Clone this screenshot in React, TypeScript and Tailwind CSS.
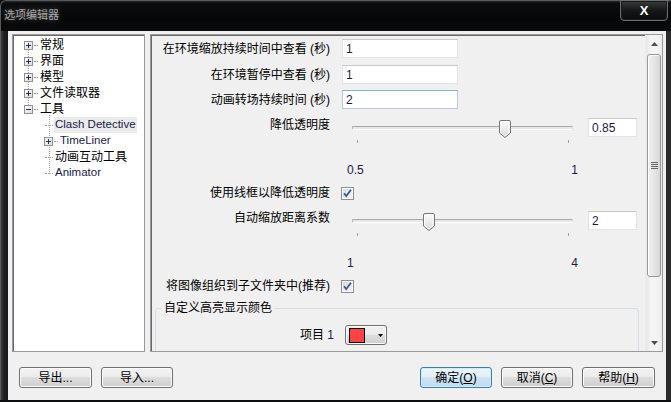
import React from "react";

const FONT = "font-['Liberation_Sans','Noto_Sans_CJK_SC',sans-serif]";
const LATIN = "text-[#1a1a4a]";

function PlusBox({ minus = false }: { minus?: boolean }) {
  return (
    <svg width="9" height="9" viewBox="0 0 9 9" className="shrink-0">
      <defs>
        <linearGradient id="pb" x1="0" y1="0" x2="1" y2="1">
          <stop offset="0" stopColor="#ffffff" />
          <stop offset="1" stopColor="#d8d8d8" />
        </linearGradient>
      </defs>
      <rect x="0.5" y="0.5" width="8" height="8" fill="url(#pb)" stroke="#919191" />
      <line x1="2" y1="4.5" x2="7" y2="4.5" stroke="#1f2f5f" />
      {!minus && <line x1="4.5" y1="2" x2="4.5" y2="7" stroke="#1f2f5f" />}
    </svg>
  );
}

function Dots({ w }: { w: number }) {
  return <div className="border-t border-dotted border-[#a0a0a0] shrink-0" style={{ width: w }} />;
}

function TreeRow({
  indent,
  box,
  minus,
  children,
  selected,
}: {
  indent: number;
  box: boolean;
  minus?: boolean;
  children: React.ReactNode;
  selected?: boolean;
}) {
  return (
    <div className="flex h-[16px] items-center" style={{ paddingLeft: indent }}>
      {box ? (
        <>
          <PlusBox minus={minus} />
          <div className="ml-[1px]">
            <Dots w={4} />
          </div>
        </>
      ) : (
        <div className="ml-[5px]">
          <Dots w={8} />
        </div>
      )}
      <div
        className={
          "ml-[1px] h-[16px] flex items-center px-[1px] whitespace-nowrap " +
          (selected ? "bg-[#ebebeb]" : "")
        }
      >
        {children}
      </div>
    </div>
  );
}

function Tree() {
  return (
    <div className="w-[133px] h-full bg-white border border-[#9a9a9a] shadow-[inset_1px_1px_0_#696969] relative overflow-hidden">
      <svg className="absolute left-0 top-0" width="133" height="200">
        <line x1="15.5" y1="15" x2="15.5" y2="71" stroke="#a0a0a0" strokeDasharray="1 1" />
        <line x1="36.5" y1="80" x2="36.5" y2="139" stroke="#a0a0a0" strokeDasharray="1 1" />
      </svg>
      <div className="relative pt-[2px] text-[12px] text-black">
        <TreeRow indent={11} box>
          常规
        </TreeRow>
        <TreeRow indent={11} box>
          界面
        </TreeRow>
        <TreeRow indent={11} box>
          模型
        </TreeRow>
        <TreeRow indent={11} box>
          文件读取器
        </TreeRow>
        <TreeRow indent={11} box minus>
          工具
        </TreeRow>
        <TreeRow indent={27} box={false} selected>
          <span className={"text-[11.5px] " + LATIN}>Clash Detective</span>
        </TreeRow>
        <TreeRow indent={31} box>
          <span className={"text-[11.5px] " + LATIN}>TimeLiner</span>
        </TreeRow>
        <TreeRow indent={27} box={false}>
          动画互动工具
        </TreeRow>
        <TreeRow indent={27} box={false}>
          <span className={"text-[11.5px] " + LATIN}>Animator</span>
        </TreeRow>
      </div>
    </div>
  );
}

function TextBox({ value, width, focus }: { value: string; width: number; focus?: boolean }) {
  return (
    <div
      className={
        "h-[19px] bg-white border flex items-center pl-[3px] text-[12px] " +
        LATIN +
        " " +
        (focus
          ? "border-[#b6cbe3] border-t-[#8eaed3]"
          : "border-[#e2e3ea] border-t-[#c7c9d0]")
      }
      style={{ width }}
    >
      {value}
    </div>
  );
}

function Label({ children, className = "" }: { children: React.ReactNode; className?: string }) {
  return <div className={"w-[179px] shrink-0 text-right whitespace-nowrap text-[12px] text-black " + className}>{children}</div>;
}

function Thumb() {
  return (
    <svg width="12" height="18" viewBox="0 0 12 18">
      <defs>
        <linearGradient id="th" x1="0" y1="0" x2="0" y2="1">
          <stop offset="0" stopColor="#fafafa" />
          <stop offset="0.5" stopColor="#ececec" />
          <stop offset="1" stopColor="#d4d4d4" />
        </linearGradient>
      </defs>
      <path d="M2 0.5 H10 Q11.5 0.5 11.5 2 V13 L6 17.5 L0.5 13 V2 Q0.5 0.5 2 0.5 Z" fill="url(#th)" stroke="#757575" />
      <path d="M2 1.5 H10 V12.6 L6 16 L1.5 12.6 V2 Z" fill="none" stroke="#ffffff" strokeOpacity="0.7" />
    </svg>
  );
}

function SliderRow({
  label,
  thumbLeft,
  min,
  max,
  value,
  mt,
}: {
  label: string;
  thumbLeft: number;
  min: string;
  max: string;
  value: string;
  mt: number;
}) {
  return (
    <div className="flex items-start" style={{ marginTop: mt }}>
      <Label className="leading-[15px]">{label}</Label>
      <div className="ml-[12px] w-[236px] shrink-0">
        <div className="relative h-[19px] pt-[8px] pl-[10px] pr-[5px]">
          <div className="h-[4px] rounded-[1px] border border-t-[#a9a9a9] border-l-[#b9b9b9] border-r-[#dcdcdc] border-b-white bg-[#e6e8e8]" />
          <div className="absolute top-[2px]" style={{ left: thumbLeft }}>
            <Thumb />
          </div>
        </div>
        <div className="flex justify-between pl-[15px] pr-[9px] mt-[3px] h-[4px]">
          <div className="w-[1px] h-[3px] bg-[#a0a0a0]" />
          <div className="w-[1px] h-[3px] bg-[#a0a0a0]" />
        </div>
        <div className={"flex justify-between pl-[5px] mt-[19px] leading-[14px] text-[12px] " + LATIN}>
          <span>{min}</span>
          <span>{max}</span>
        </div>
      </div>
      <div className="ml-[10px]">
        <TextBox value={value} width={49} />
      </div>
    </div>
  );
}

function CheckBox() {
  return (
    <svg width="13" height="13" viewBox="0 0 13 13" className="shrink-0">
      <defs>
        <linearGradient id="cb" x1="0" y1="0" x2="1" y2="1">
          <stop offset="0" stopColor="#d9d9d9" />
          <stop offset="1" stopColor="#f6f6f6" />
        </linearGradient>
      </defs>
      <rect x="0.5" y="0.5" width="12" height="12" fill="#fff" stroke="#8e8f8f" />
      <rect x="2" y="2" width="9" height="9" fill="url(#cb)" />
      <path d="M3 6.2 L5.2 9 L10 2.8" fill="none" stroke="#3a55a0" strokeWidth="1.7" />
    </svg>
  );
}

function CheckRow({ label, mt }: { label: React.ReactNode; mt: number }) {
  return (
    <div className="flex items-center h-[14px]" style={{ marginTop: mt }}>
      <Label className="leading-[14px]">{label}</Label>
      <div className="ml-[11px]">
        <CheckBox />
      </div>
    </div>
  );
}

function Scrollbar() {
  return (
    <div className="w-[17px] h-full flex flex-col bg-[linear-gradient(90deg,#e6e6e6,#f4f4f4_30%,#f4f4f4_70%,#ebebeb)] border-l border-[#ececec]">
      <div className="h-[17px] flex items-center justify-center">
        <svg width="7" height="4" viewBox="0 0 7 4">
          <path d="M0 4 L3.5 0 L7 4 Z" fill="#4d4d4d" />
        </svg>
      </div>
      <div className="mt-[2px] h-[223px] mx-[1px] rounded-[3px] border border-[#999999] bg-[linear-gradient(90deg,#f2f2f2,#e6e6e6_50%,#d6d6d6)] shadow-[inset_1px_1px_0_#ffffff] flex items-center justify-center">
        <div className="flex flex-col gap-[1px]">
          <div className="w-[7px] h-[1px] bg-[#666]" />
          <div className="w-[7px] h-[1px] bg-[#666]" />
          <div className="w-[7px] h-[1px] bg-[#666]" />
          <div className="w-[7px] h-[1px] bg-[#666]" />
        </div>
      </div>
      <div className="flex-1" />
      <div className="h-[17px] flex items-center justify-center">
        <svg width="7" height="4" viewBox="0 0 7 4">
          <path d="M0 0 L7 0 L3.5 4 Z" fill="#4d4d4d" />
        </svg>
      </div>
    </div>
  );
}

function ColorDrop() {
  return (
    <div className="w-[42px] h-[20px] rounded-[3px] border border-[#707070] bg-[linear-gradient(#f2f2f2_0%,#ebebeb_49%,#dddddd_50%,#cfcfcf_100%)] shadow-[inset_0_0_0_1px_#fbfbfb] flex items-center pl-[3px]">
      <div className="w-[16px] h-[15px] border border-black bg-[#ff4242]" />
      <svg width="5" height="3" viewBox="0 0 5 3" className="ml-[13px]">
        <path d="M0 0 H5 L2.5 3 Z" fill="#000" />
      </svg>
    </div>
  );
}

function RightPanel() {
  return (
    <div className="flex-1 h-full border border-[#9a9a9a] shadow-[inset_1px_1px_0_#696969] bg-[#f0f0f0] flex overflow-hidden">
      <div className="flex-1 flex flex-col overflow-hidden pt-[4px]">
        <div className="flex items-center h-[19px]">
          <Label>在环境缩放持续时间中查看 (秒)</Label>
          <div className="ml-[12px]">
            <TextBox value="1" width={116} />
          </div>
        </div>
        <div className="flex items-center h-[19px] mt-[7px]">
          <Label>在环境暂停中查看 (秒)</Label>
          <div className="ml-[12px]">
            <TextBox value="1" width={116} />
          </div>
        </div>
        <div className="flex items-center h-[20px] mt-[6px]">
          <Label>动画转场持续时间 (秒)</Label>
          <div className="ml-[12px]">
            <TextBox value="2" width={116} focus />
          </div>
        </div>
        <SliderRow label="降低透明度" thumbLeft={157} min="0.5" max="1" value="0.85" mt={9} />
        <CheckRow label="使用线框以降低透明度" mt={9} />
        <SliderRow label="自动缩放距离系数" thumbLeft={81} min="1" max="4" value="2" mt={11} />
        <CheckRow label="将图像组织到子文件夹中(推荐)" mt={9} />
        <fieldset className="ml-[4px] mr-[6px] mt-[8px] border border-[#d5dfe5] rounded-[3px] shrink-0 h-[90px]">
          <legend className="ml-[6px] px-[2px] text-[12px] leading-[14px] text-black">自定义高亮显示颜色</legend>
          <div className="flex items-center mt-[10px] h-[20px]">
            <div className="w-[178px] text-right text-[12px] text-black whitespace-nowrap">
              项目 <span className={LATIN}>1</span>
            </div>
            <div className="ml-[11px]">
              <ColorDrop />
            </div>
          </div>
        </fieldset>
      </div>
      <Scrollbar />
    </div>
  );
}

function Btn({ children, def, w }: { children: React.ReactNode; def?: boolean; w: number }) {
  return (
    <div
      className={
        "h-[21px] rounded-[3px] border flex items-center justify-center text-[12px] text-black " +
        (def
          ? "border-[#3c7fb1] bg-[linear-gradient(#ecf5fb_0%,#e1eef8_49%,#cfe4f3_50%,#c1dbee_100%)] shadow-[inset_0_0_0_1px_#c9ecfb]"
          : "border-[#707070] bg-[linear-gradient(#f2f2f2_0%,#ebebeb_49%,#dddddd_50%,#cfcfcf_100%)] shadow-[inset_0_0_0_1px_#fcfcfc]")
      }
      style={{ width: w }}
    >
      {children}
    </div>
  );
}

export default function App() {
  return (
    <div className={"w-[671px] h-[402px] overflow-hidden bg-[#0d0e10] flex flex-col " + FONT}>
      <div className="h-[31px] relative shrink-0 bg-[linear-gradient(#2a2b2d_0px,#0b0c0e_2px,#050607_60%,#0a0b0d)] border-t border-l border-[#5a5a5a] rounded-tl-[6px]">
        <div className="absolute left-[3px] top-[7px] text-[11px] leading-[14px] text-[#a8a8a8] [text-shadow:0_0_6px_rgba(255,255,255,0.35)]">
          选项编辑器
        </div>
        <div className="absolute left-[619px] top-[-1px] w-[48px] h-[21px] rounded-b-[4px] border border-[#6e6e6e] bg-[linear-gradient(#3a3b3d,#16171a_50%,#0b0c0e)] shadow-[inset_0_0_0_1px_#1a1a1a] flex items-center justify-center">
          <span className="text-white font-bold text-[13px] leading-none font-['Liberation_Sans',sans-serif]">X</span>
        </div>
      </div>
      <div className="flex h-[369px] pl-[7px] pr-[5px] bg-[linear-gradient(90deg,#3b3c3e,#1f2022_3px,#18191b_6px,#2a2b2d)] border-l border-[#5a5a5a]">
        <div className="flex-1 bg-[#f0f0f0] flex flex-col pt-[3px] pl-[4px] pr-[3px]">
          <div className="flex h-[318px] gap-[5px] shrink-0">
            <Tree />
            <RightPanel />
          </div>
          <div className="flex mt-[15px] pl-[7px] pr-[8px]">
            <Btn w={73}>导出...</Btn>
            <div className="ml-[9px]">
              <Btn w={72}>导入...</Btn>
            </div>
            <div className="flex-1" />
            <Btn w={72} def>
              确定(<span className="underline">O</span>)
            </Btn>
            <div className="ml-[9px]">
              <Btn w={72}>
                取消(<span className="underline">C</span>)
              </Btn>
            </div>
            <div className="ml-[9px]">
              <Btn w={73}>
                帮助(<span className="underline">H</span>)
              </Btn>
            </div>
          </div>
        </div>
      </div>
    </div>
  );
}
